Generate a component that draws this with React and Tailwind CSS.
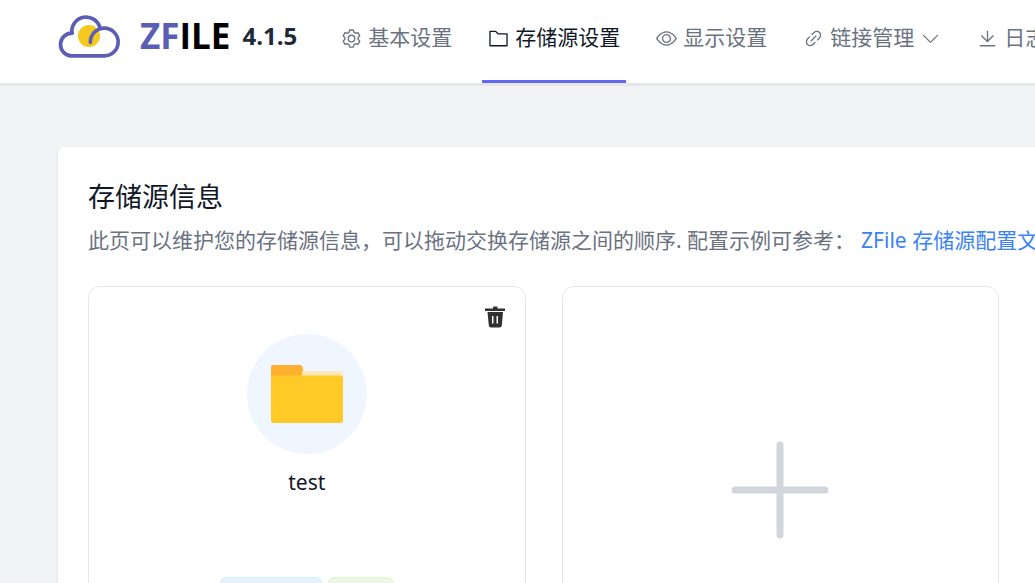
const ICONS = {
  setting:
    'M600.704 64a32 32 0 0 1 30.464 22.208l35.2 109.376c14.784 7.232 28.928 15.36 42.432 24.512l112.384-24.192a32 32 0 0 1 34.432 15.36L944.32 364.8a32 32 0 0 1-4.032 37.504l-77.12 85.12a357.12 357.12 0 0 1 0 49.024l77.12 85.248a32 32 0 0 1 4.032 37.504l-88.704 153.6a32 32 0 0 1-34.432 15.296L708.8 803.904c-13.44 9.088-27.648 17.28-42.368 24.512l-35.264 109.376A32 32 0 0 1 600.704 960H423.296a32 32 0 0 1-30.464-22.208L357.696 828.48a351.616 351.616 0 0 1-42.56-24.64l-112.32 24.256a32 32 0 0 1-34.432-15.36L79.68 659.2a32 32 0 0 1 4.032-37.504l77.12-85.248a357.12 357.12 0 0 1 0-48.896l-77.12-85.248A32 32 0 0 1 79.68 364.8l88.704-153.6a32 32 0 0 1 34.432-15.296l112.32 24.256c13.568-9.152 27.776-17.408 42.56-24.64l35.2-109.312A32 32 0 0 1 423.232 64H600.64zm-23.424 64H446.72l-36.352 113.088-24.512 11.968a294.113 294.113 0 0 0-34.816 20.096l-22.656 15.36-116.224-25.088-65.28 113.152 79.68 88.192-1.92 27.136a293.12 293.12 0 0 0 0 40.192l1.92 27.136-79.808 88.192 65.344 113.152 116.224-25.024 22.656 15.296a294.113 294.113 0 0 0 34.816 20.096l24.512 11.968L446.72 896h130.688l36.48-113.152 24.448-11.904a288.282 288.282 0 0 0 34.752-20.096l22.592-15.296 116.288 25.024 65.28-113.152-79.744-88.192 1.92-27.136a293.12 293.12 0 0 0 0-40.256l-1.92-27.136 79.808-88.128-65.344-113.152-116.288 24.96-22.592-15.232a287.616 287.616 0 0 0-34.752-20.096l-24.448-11.904L577.344 128zM512 320a192 192 0 1 1 0 384 192 192 0 0 1 0-384zm0 64a128 128 0 1 0 0 256 128 128 0 0 0 0-256z',
  folder:
    'M128 192v640h768V320H485.76L357.504 192H128zm-32-64h287.872l128.384 128H928a32 32 0 0 1 32 32v576a32 32 0 0 1-32 32H96a32 32 0 0 1-32-32V160a32 32 0 0 1 32-32z',
  view: 'M512 160c320 0 512 352 512 352S832 864 512 864 0 512 0 512s192-352 512-352zm0 64c-225.28 0-384.128 208.064-436.8 288 52.608 79.872 211.456 288 436.8 288 225.28 0 384.128-208.064 436.8-288-52.608-79.872-211.456-288-436.8-288zm0 64a224 224 0 1 1 0 448 224 224 0 0 1 0-448zm0 64a160.192 160.192 0 0 0-160 160c0 88.192 71.744 160 160 160s160-71.808 160-160-71.744-160-160-160z',
  link: 'M715.648 625.152 670.4 579.904l90.496-90.56c75.008-74.944 85.12-186.368 22.656-248.896-62.528-62.464-173.952-52.352-248.96 22.656L444.16 353.6l-45.248-45.248 90.496-90.496c100.032-99.968 251.968-110.08 339.456-22.656 87.488 87.488 77.312 239.424-22.656 339.456l-90.496 90.496zm-90.496 90.496-90.496 90.496C434.624 906.112 282.688 916.224 195.2 828.8c-87.488-87.488-77.312-239.424 22.656-339.456l90.496-90.496 45.248 45.248-90.496 90.56c-75.008 74.944-85.12 186.368-22.656 248.896 62.528 62.464 173.952 52.352 248.96-22.656l90.496-90.496 45.248 45.248zm0-362.048 45.248 45.248L398.848 670.4 353.6 625.152 625.152 353.6z',
  arrowDown:
    'M831.872 340.864 512 652.672 192.128 340.864a30.592 30.592 0 0 0-42.752 0 29.12 29.12 0 0 0 0 41.6L489.664 714.24a32 32 0 0 0 44.672 0l340.288-331.712a29.12 29.12 0 0 0 0-41.728 30.592 30.592 0 0 0-42.752 0z',
  download:
    'M160 832h704a32 32 0 1 1 0 64H160a32 32 0 1 1 0-64zm384-253.696 236.288-236.352 45.248 45.248L508.8 704 192 387.2l45.248-45.248L480 584.704V128h64v450.304z',
};

const NAV = [
  { label: '基本设置', icon: 'setting' },
  { label: '存储源设置', icon: 'folder', active: true },
  { label: '显示设置', icon: 'view' },
  { label: '链接管理', icon: 'link', children: true },
  { label: '日志', icon: 'download' },
];

const Icon = ({ name }) => (
  <svg viewBox="0 0 1024 1024" fill="currentColor" className="size-[21px] shrink-0" aria-hidden="true">
    <path d={ICONS[name]} />
  </svg>
);

const Logo = () => (
  <svg viewBox="54 40 186 132" fill="none" className="w-[62px] h-11 shrink-0" aria-hidden="true">
    <circle cx="147" cy="106" r="33" fill="#f5c91d" />
    <g stroke="#5a5eb5" strokeWidth="11" strokeLinecap="round">
      <path d="M97 97.500A34 34 0 0 0 94 165.500H193A41.500 41.500 0 0 0 193 82.500A42 42 0 0 0 151 125" />
      <path d="M95.500 97A43 43 0 0 1 180 82" />
    </g>
  </svg>
);

const NavItem = ({ item }) => {
  const Tag = item.children ? 'button' : 'a';
  return (
    <Tag
      href={item.children ? undefined : '#'}
      className={
        item.active
          ? 'flex shrink-0 items-center gap-1.5 px-1.5 pb-1 border-b-3 border-[#6366f1] text-gray-900'
          : 'flex shrink-0 items-center gap-1.5 px-1.5 pb-1 border-b-3 border-transparent text-gray-500'
      }
    >
      <Icon name={item.icon} />
      <span>{item.label}</span>
      {item.children && <Icon name="arrowDown" />}
    </Tag>
  );
};

const Header = () => (
  <header className="flex bg-white border-b-3 border-gray-200 pl-[58px] whitespace-nowrap">
    <div className="flex h-[83px] shrink-0 items-center pb-3">
      <Logo />
      <span className="ml-5 font-['Open_Sans',sans-serif] text-[35px] leading-10 font-bold text-black">
        <span className="text-[#5a5eb5]">ZF</span>ILE
      </span>
      <span className="ml-3 font-['Open_Sans',sans-serif] text-[24px] leading-10 font-bold text-gray-800">
        4.1.5
      </span>
    </div>
    <nav className="ml-[38px] flex gap-6 text-[21px]">
      {NAV.map((item) => (
        <NavItem key={item.label} item={item} />
      ))}
    </nav>
  </header>
);

const FolderIcon = () => (
  <svg viewBox="0 0 72 58" className="w-[72px] h-[58px]" aria-hidden="true">
    <path d="M0 2a2 2 0 0 1 2-2h27q2 0 2.500 2l3 12H0z" fill="#ffb02e" />
    <path d="M31 6h39a2 2 0 0 1 2 2v8H31z" fill="#ffe9b8" />
    <rect y="10.500" width="72" height="47.500" rx="2.500" fill="#ffc928" />
  </svg>
);

const TrashIcon = () => (
  <svg viewBox="0 0 20 22" className="w-5 h-[22px]" fill="#303133" aria-hidden="true">
    <path d="M8 2.500V1.500Q8 .5 9 .5h2.500q1 0 1 1v1H20V5H0V2.500z" />
    <path
      fillRule="evenodd"
      d="M2.500 6h15.500l-1.200 13.500q-.2 2-2.300 2H6q-2 0-2.200-2zM7 10v7.500h1.500V10zm4.500 0v7.500H13V10z"
    />
  </svg>
);

const SourceCard = () => (
  <div className="relative flex min-h-[407px] flex-col items-center rounded-xl border border-gray-200 pt-[47px]">
    <button aria-label="删除" className="absolute top-[19px] right-5">
      <TrashIcon />
    </button>
    <div className="flex size-[120px] items-center justify-center rounded-full bg-[#eff6ff]">
      <FolderIcon />
    </div>
    <h3 className="mt-3 text-[21px] leading-8 text-gray-900">test</h3>
    <div className="mt-[79px] flex gap-1.5 text-[18px] leading-[34px]">
      <span className="rounded-md border border-[#d9ecff] bg-[#e6f1ff] px-3.5 text-[#409eff]">本地存储</span>
      <span className="rounded-md border border-[#e1f3d8] bg-[#edf7e6] px-3.5 text-[#67c23a]">启用</span>
    </div>
  </div>
);

const AddCard = () => (
  <button
    aria-label="新增存储源"
    className="flex min-h-[407px] items-center justify-center rounded-xl border border-gray-200 text-gray-300"
  >
    <svg viewBox="0 0 98 98" className="size-[98px]" stroke="currentColor" strokeWidth="7" strokeLinecap="round">
      <path d="M49 4v90M4 49h90" />
    </svg>
  </button>
);

export default function App() {
  return (
    <div className="h-screen overflow-hidden bg-[#f2f3f5] font-['Noto_Sans','Noto_Sans_CJK_SC',sans-serif]">
      <Header />
      <main className="pt-[61px] pl-[58px]">
        <section className="rounded-l-md bg-white pt-8 pr-9 pb-9 pl-[30px] shadow">
          <h2 className="text-[27px] leading-9 text-gray-900">存储源信息</h2>
          <p className="mt-[9px] text-[21px] leading-8 whitespace-nowrap text-gray-500">
            此页可以维护您的存储源信息，可以拖动交换存储源之间的顺序. 配置示例可参考：
            <a href="#" className="ml-1.5 text-[#3b82f6]">
              ZFile 存储源配置文档
            </a>
          </p>
          <div className="mt-[30px] grid grid-cols-2 gap-9">
            <SourceCard />
            <AddCard />
          </div>
        </section>
      </main>
    </div>
  );
}
